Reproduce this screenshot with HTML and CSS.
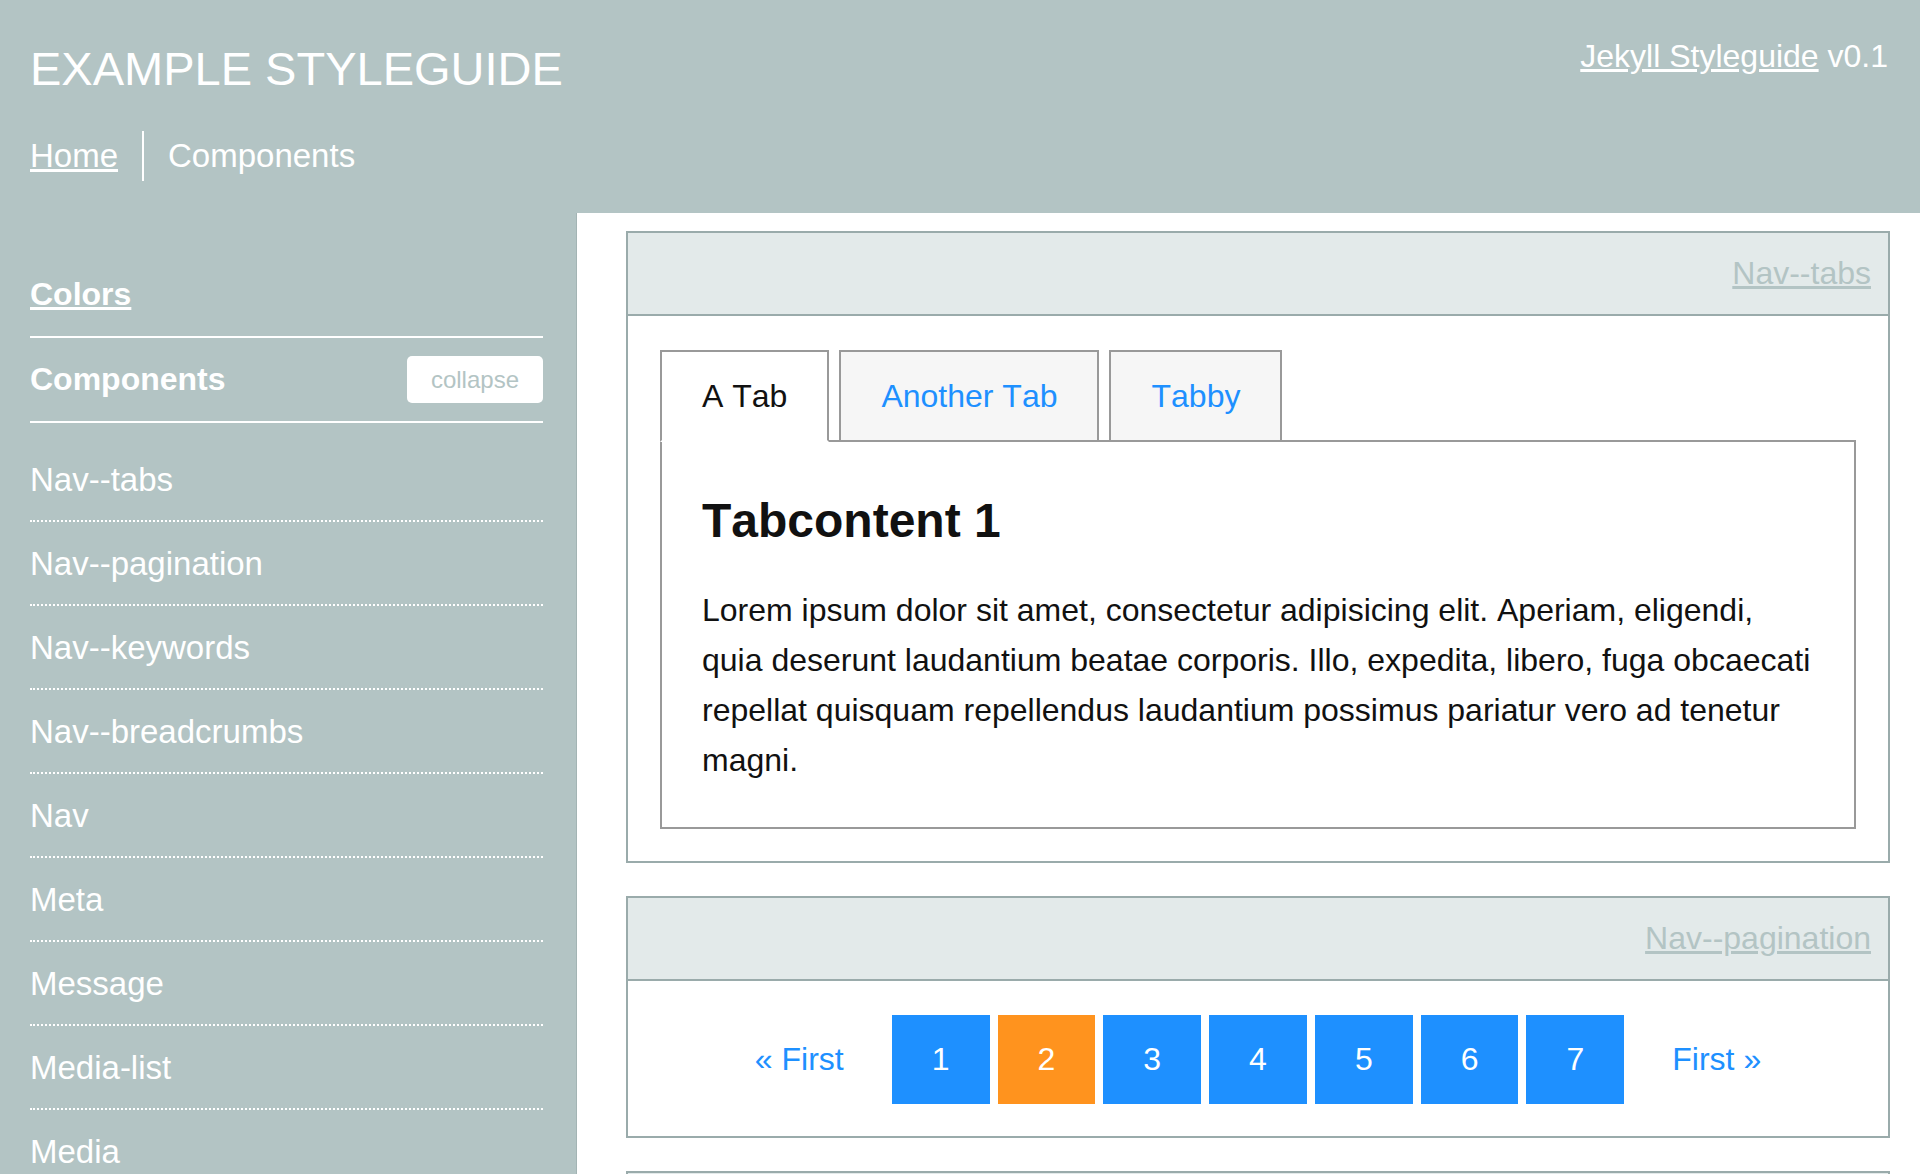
FILE: index.html
```html
<!DOCTYPE html>
<html lang="en">
<head>
  <meta charset="UTF-8" />
  <meta name="viewport" content="width=device-width, initial-scale=1.0"/>
  <title>Components | Example Styleguide</title>
  <link rel="stylesheet" href="styles.css">
</head>
<body>

<header class="site-header">
  <div class="brand">
    <h1 class="site-title">EXAMPLE STYLEGUIDE</h1>
    <nav class="crumbs">
      <a href="#" class="crumb">Home</a>
      <span class="crumb crumb-current">Components</span>
    </nav>
  </div>
  <div class="version"><a href="#">Jekyll Styleguide</a> v0.1</div>
</header>

<div class="layout">
  <aside class="sidebar">
    <ul class="side-sections">
      <li class="side-section"><a href="#">Colors</a></li>
      <li class="side-section">
        <span>Components</span>
        <button class="collapse-btn" type="button">collapse</button>
      </li>
    </ul>
    <ul class="side-list">
      <li><a href="#nav-tabs">Nav--tabs</a></li>
      <li><a href="#nav-pagination">Nav--pagination</a></li>
      <li><a href="#nav-keywords">Nav--keywords</a></li>
      <li><a href="#nav-breadcrumbs">Nav--breadcrumbs</a></li>
      <li><a href="#nav">Nav</a></li>
      <li><a href="#meta">Meta</a></li>
      <li><a href="#message">Message</a></li>
      <li><a href="#media-list">Media-list</a></li>
      <li><a href="#media">Media</a></li>
      <li><a href="#buttons">Buttons</a></li>
    </ul>
  </aside>

  <main class="content">
    <section class="component" id="nav-tabs">
      <div class="component-head"><a href="#nav-tabs">Nav--tabs</a></div>
      <div class="component-body">
        <ul class="tabs">
          <li class="tab is-active">A Tab</li>
          <li class="tab"><a href="#">Another Tab</a></li>
          <li class="tab"><a href="#">Tabby</a></li>
        </ul>
        <div class="tab-panel">
          <h2>Tabcontent 1</h2>
          <p>Lorem ipsum dolor sit amet, consectetur adipisicing elit. Aperiam, eligendi, quia deserunt laudantium beatae corporis. Illo, expedita, libero, fuga obcaecati repellat quisquam repellendus laudantium possimus pariatur vero ad tenetur magni.</p>
        </div>
      </div>
    </section>

    <section class="component" id="nav-pagination">
      <div class="component-head"><a href="#nav-pagination">Nav--pagination</a></div>
      <div class="component-body">
        <ul class="pagination">
          <li><a href="#" class="page-link">&laquo; First</a></li>
          <li><a href="#" class="page-num">1</a></li>
          <li><a href="#" class="page-num is-current">2</a></li>
          <li><a href="#" class="page-num">3</a></li>
          <li><a href="#" class="page-num">4</a></li>
          <li><a href="#" class="page-num">5</a></li>
          <li><a href="#" class="page-num">6</a></li>
          <li><a href="#" class="page-num">7</a></li>
          <li><a href="#" class="page-link">First &raquo;</a></li>
        </ul>
      </div>
    </section>

    <section class="component" id="nav-keywords">
      <div class="component-head"><a href="#nav-keywords">Nav--keywords</a></div>
      <div class="component-body">
        <ul class="keywords">
          <li><a href="#">Jekyll</a></li>
          <li><a href="#">Styleguide</a></li>
          <li><a href="#">Components</a></li>
        </ul>
      </div>
    </section>
  </main>
</div>

</body>
</html>
```

FILE: styles.css
```css
body {
  font-family: 'Liberation Sans', Arial, Helvetica, sans-serif;
  font-size: 32px;
  font-kerning: none;
  background: #b3c4c4;
  color: #111;
  margin: 0;
  padding: 0;
}

ul {
  list-style: none;
  margin: 0;
  padding: 0;
}

a {
  color: inherit;
}

/* header */

.site-header {
  display: flex;
  justify-content: space-between;
  align-items: flex-start;
  padding: 40px 32px 32px 30px;
  color: #fff;
}

.site-title {
  margin: 6px 0 0;
  font-size: 47px;
  font-weight: normal;
  line-height: 46px;
}

.crumbs {
  display: flex;
  margin-top: 39px;
  font-size: 33px;
  line-height: 50px;
}

.crumb {
  padding-right: 24px;
}

.crumb-current {
  padding: 0 0 0 24px;
  border-left: 2px solid #fff;
}

.version {
  line-height: 32px;
}

/* layout */

.layout {
  display: flex;
  align-items: stretch;
}

.sidebar {
  flex: 0 0 577px;
  box-sizing: border-box;
  padding: 40px 33px 0 30px;
  border-right: 1px solid #a3b4b4;
  color: #fff;
}

.side-section {
  display: flex;
  justify-content: space-between;
  align-items: center;
  padding: 18px 0;
  line-height: 47px;
  font-weight: bold;
  border-bottom: 2px solid #fff;
}

.collapse-btn {
  font-family: inherit;
  font-size: 24px;
  line-height: 47px;
  padding: 0 24px;
  border: none;
  border-radius: 5px;
  background: #fff;
  color: #b3c4c4;
  cursor: pointer;
}

.side-list {
  padding-top: 15px;
  font-size: 33px;
}

.side-list li {
  padding: 18px 0 17px;
  line-height: 47px;
  border-bottom: 2px dotted #fff;
}

.side-list a {
  text-decoration: none;
}

.content {
  flex: 1;
  background: #fff;
  padding: 18px 30px 0 49px;
  min-height: calc(100vh - 213px);
}

/* component panels */

.component {
  border: 2px solid #9aabab;
  margin-bottom: 33px;
}

.component-head {
  background: #e3eaea;
  border-bottom: 2px solid #9aabab;
  padding: 0 17px;
  line-height: 81px;
  text-align: right;
}

.component-head a {
  color: #b3c4c4;
}

.component-body {
  padding: 34px 32px 32px;
}

/* tabs */

.tabs {
  display: flex;
  gap: 10px;
  margin-bottom: -2px;
}

.tab {
  position: relative;
  padding: 0 40px;
  line-height: 88px;
  border: 2px solid #999;
  background: #f6f6f6;
}

.tab a {
  color: #1e90ff;
  text-decoration: none;
}

.tab.is-active {
  background: #fff;
  border-bottom-color: #fff;
  z-index: 1;
}

.tab-panel {
  border: 2px solid #999;
  padding: 50px 36px 42px 40px;
}

.tab-panel h2 {
  margin: 0 0 35px;
  font-size: 48px;
  line-height: 58px;
}

.tab-panel p {
  margin: 0;
  line-height: 50px;
}

/* pagination */

.pagination {
  display: flex;
  justify-content: center;
  gap: 8px;
}

.pagination a {
  display: block;
  padding: 0 40px;
  line-height: 89px;
  text-decoration: none;
}

.page-link {
  color: #1e90ff;
}

.page-num {
  background: #1e90ff;
  color: #fff;
}

.page-num.is-current {
  background: #ff931e;
}

.keywords {
  display: flex;
  gap: 16px;
}

.keywords a {
  color: #1e90ff;
}
```
